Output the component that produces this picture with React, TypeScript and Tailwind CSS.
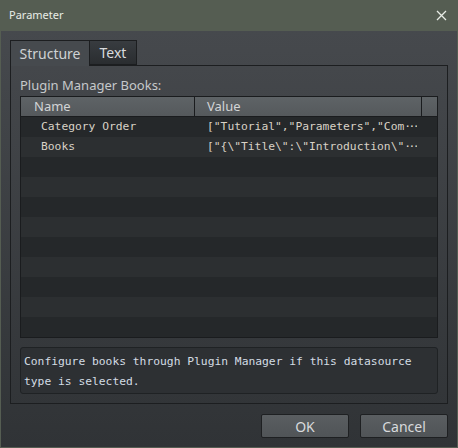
import React from "react";

const rows = [
  { name: "Category Order", value: '["Tutorial","Parameters","Com' },
  { name: "Books", value: '["{\\"Title\\":\\"Introduction\\"' },
];

const ui = { fontFamily: '"Noto Sans", "Open Sans", sans-serif' };
const mono = { fontFamily: '"DejaVu Sans Mono", "Liberation Mono", monospace' };

function Dots() {
  return <span className="tracking-[-2.5px]">···</span>;
}

export default function App() {
  const blank = Array.from({ length: 11 - rows.length });

  return (
    <div
      className="w-[458px] h-[448px] flex flex-col bg-[#555d52] px-px pb-px overflow-hidden"
      style={ui}
    >
      {/* Title bar */}
      <div className="h-[31px] flex items-center justify-between pl-[8px] pr-[10px] text-[11px] text-[#e8ece6]">
        <span>Parameter</span>
        <svg width="11" height="11" viewBox="0 0 11 11" className="stroke-[#e8ece6]">
          <path d="M1 1L10 10M10 1L1 10" strokeWidth="1.3" />
        </svg>
      </div>

      {/* Body */}
      <div className="flex-1 flex flex-col bg-gradient-to-b from-[#46494d] to-[#303336] px-[9px] pt-[9px]">
        {/* Tabs */}
        <div className="flex h-[25px] text-[14px]">
          <div className="w-[80px] border border-b-0 border-[#1c1e20] flex items-center justify-center text-[#cfd2d4] bg-[#464a4e] relative z-10 -mb-px">
            Structure
          </div>
          <div className="w-[47px] border border-l-0 border-[#1c1e20] flex items-center justify-center text-[#d8dadc] bg-gradient-to-b from-[#383c40] to-[#2a2d30]">
            Text
          </div>
        </div>

        {/* Panel */}
        <div className="h-[339px] border border-[#1c1e20] px-[9px] pt-[11px]">
          <div className="text-[13px] leading-[17px] text-[#c6c9cb] mb-[2px]">Plugin Manager Books:</div>

          {/* Grid */}
          <div className="border border-[#1a1c1e] bg-[#25282a]">
            <div className="h-[20px] flex text-[13px] text-[#d2d4d6] bg-gradient-to-b from-[#5e6366] to-[#55595c] border-b border-[#1a1c1e]">
              <div className="w-[174px] pl-[13px] flex items-center border-r border-[#1a1c1e]">Name</div>
              <div className="w-[227px] pl-[12px] flex items-center border-r border-[#1a1c1e]">Value</div>
              <div className="flex-1" />
            </div>
            {rows.map((r, i) => (
              <div
                key={r.name}
                className={`h-[20px] flex items-center text-[11.3px] text-[#d9d2c6] whitespace-nowrap ${
                  i % 2 === 0 ? "bg-[#25282a]" : "bg-[#2c2f31]"
                }`}
                style={mono}
              >
                <div className="w-[186px] pl-[20px]">{r.name}</div>
                <div className="overflow-hidden">
                  {r.value}
                  <Dots />
                </div>
              </div>
            ))}
            {blank.map((_, i) => (
              <div
                key={i}
                className={`h-[20px] ${(i + rows.length) % 2 === 0 ? "bg-[#25282a]" : "bg-[#2c2f31]"}`}
              />
            ))}
          </div>

          {/* Help text */}
          <div
            className="mt-[9px] h-[47px] rounded-[3px] border border-[#1f2224] bg-[#2d3033] px-[3px] pt-[4px] text-[11.3px] leading-[20px] text-[#d3dce4]"
            style={mono}
          >
            Configure books through Plugin Manager if this datasource
            <br />
            type is selected.
          </div>
        </div>

        {/* Buttons */}
        <div className="flex justify-end gap-[11px] mt-[10px]">
          <button className="w-[88px] h-[24px] rounded-[2px] border border-[#1e2022] bg-gradient-to-b from-[#5a5e61] to-[#505457] text-[14px] text-[#d8dadc]">
            OK
          </button>
          <button className="w-[88px] h-[24px] rounded-[2px] border border-[#1e2022] bg-gradient-to-b from-[#5a5e61] to-[#505457] text-[14px] text-[#d8dadc]">
            Cancel
          </button>
        </div>
      </div>
    </div>
  );
}
